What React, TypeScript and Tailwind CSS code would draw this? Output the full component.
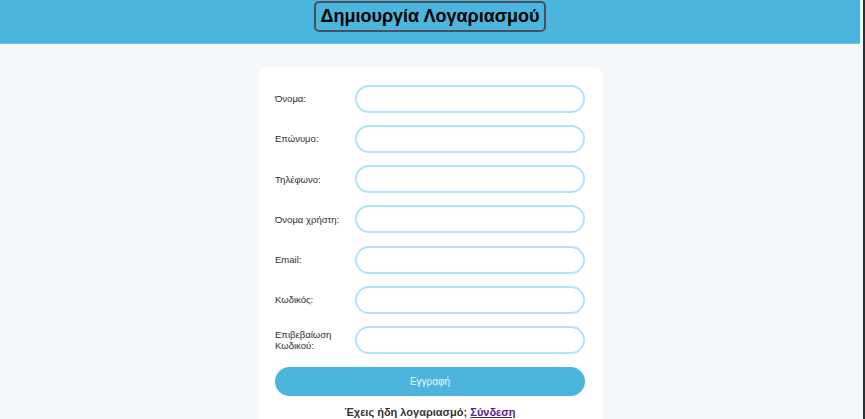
import React from 'react';

const fields = [
  { label: 'Όνομα:', type: 'text' },
  { label: 'Επώνυμο:', type: 'text' },
  { label: 'Τηλέφωνο:', type: 'tel' },
  { label: 'Όνομα χρήστη:', type: 'text' },
  { label: 'Email:', type: 'email' },
  { label: 'Κωδικός:', type: 'password' },
  { label: 'Επιβεβαίωση Κωδικού:', type: 'password' },
];

const App = () => {
  return (
    <div className="flex h-[419px] w-full overflow-hidden bg-[#f4f8fb] font-['Liberation_Sans',Arial,sans-serif]">
      <div className="flex flex-1 flex-col pr-[3px]">
        <header className="flex h-[44px] shrink-0 justify-center border-b border-[#6cc2e2] bg-[#4bb5dd]">
          <h1 className="mt-[1px] h-[31px] rounded-[5px] border-2 border-[#4a4f5c] px-[4px] text-[18px] leading-[27px] font-bold text-black">
            Δημιουργία Λογαριασμού
          </h1>
        </header>

        <main className="flex shrink-0 justify-center pt-[23px]">
          <form className="w-[344px] rounded-[8px] bg-white px-[17px] pt-[17.5px] pb-4">
            <div className="flex flex-col gap-[12.3px]">
              {fields.map((f) => (
                <div key={f.label} className="flex items-center">
                  <label className="w-[80px] shrink-0 text-[9.5px] leading-[11px] text-[#2e2e2e]">
                    {f.label}
                  </label>
                  <input
                    type={f.type}
                    className="h-[28px] flex-1 rounded-full border-2 border-[#b3e3fb] bg-white px-3 text-[12px] outline-none"
                  />
                </div>
              ))}
            </div>

            <button
              type="button"
              className="mt-[12.5px] h-[29px] w-full rounded-full bg-[#4bb5dd] text-[10px] text-white/90"
            >
              Εγγραφή
            </button>

            <p className="mt-[10px] text-center text-[11px] leading-[13px] font-bold text-[#333]">
              Έχεις ήδη λογαριασμό;{' '}
              <a href="#" className="text-[#551a8b] underline">
                Σύνδεση
              </a>
            </p>
          </form>
        </main>
      </div>
      <div className="w-[2px] bg-[#2b2f36]" />
    </div>
  );
};

export default App;
